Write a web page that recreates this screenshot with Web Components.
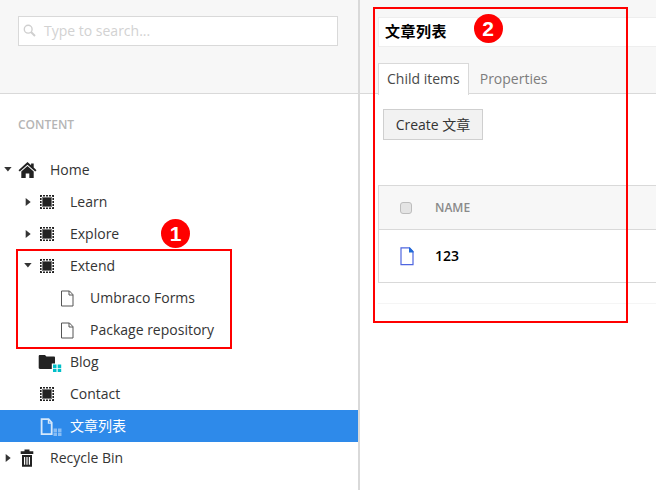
<!DOCTYPE html>
<html>
<head>
<meta charset="utf-8">
<title>Content</title>
<style>
  html, body { margin: 0; height: 100%; overflow: hidden; background: #fff; }
  body { font: 14px "Open Sans", "Noto Sans CJK SC", sans-serif; color: #343434; }
</style>
</head>
<body>

<app-shell>
  <tree-panel slot="left">
    <tree-row depth="0" arrow="down" icon="home">Home</tree-row>
    <tree-row depth="1" arrow="right" icon="grid">Learn</tree-row>
    <tree-row depth="1" arrow="right" icon="grid">Explore</tree-row>
    <tree-row depth="1" arrow="down" icon="grid">Extend</tree-row>
    <tree-row depth="2" icon="doc">Umbraco Forms</tree-row>
    <tree-row depth="2" icon="doc">Package repository</tree-row>
    <tree-row depth="1" icon="folder">Blog</tree-row>
    <tree-row depth="1" icon="grid">Contact</tree-row>
    <tree-row depth="1" icon="doclist" active>文章列表</tree-row>
    <tree-row depth="0" arrow="right" icon="trash">Recycle Bin</tree-row>
  </tree-panel>
  <editor-panel slot="right" name="文章列表"></editor-panel>
</app-shell>

<note-mark n="1" style="left:16px;top:249px;width:216px;height:100px;--bx:143px;--by:-32px"></note-mark>
<note-mark n="2" style="left:373px;top:7px;width:255px;height:316px;--bx:98.5px;--by:5px"></note-mark>

<script>
const ICONS = {
  home: '<g transform="translate(.5 2)"><path fill="currentColor" d="M9 0 0 8.2l1.3 1.4L9 2.7l7.7 6.9L18 8.2l-2.8-2.6V1.4h-2.6v1.9L9 0Z"/><path fill="currentColor" d="M2.8 9.6 9 4l6.2 5.6V16h-4.4v-4.4H7.2V16H2.8Z"/></g>',
  grid: '<rect x="5" y="6" width="8" height="8" fill="currentColor"/><rect x="4.5" y="5.5" width="9" height="9" fill="none" stroke="currentColor" stroke-opacity=".6"/><path fill="none" stroke="currentColor" stroke-width="1.6" stroke-dasharray="2 1" d="M2 3.8h14M2 16.2h14M2.8 3v14M15.2 3v14"/>',
  doc: '<path fill="#fff" stroke="#555" d="M3.5 3h8l3.5 3.7V18H3.5Z"/><path fill="none" stroke="#555" d="M11 3v4h4"/>',
  folder: '<path fill="currentColor" d="M.7 4.2C.7 3.4 1.2 3 1.9 3H7l1.4 1.4h7.4c.8 0 1.2.5 1.2 1.2V17H1.9c-.7 0-1.2-.5-1.2-1.2Z"/><path fill="#fff" d="M13.8 11.5H24V21H13.8Z"/><path fill="#00bfc8" d="M15 12.5h3.5V16H15zM19.7 12.5h3.5V16h-3.5zM15 16.8h3.5v3.4H15zM19.7 16.8h3.5v3.4h-3.5z"/>',
  doclist: '<path fill="none" stroke="currentColor" stroke-width="1.8" d="M3.6 3.2h7l3.1 3.4v11.6H3.6Z"/><path fill="none" stroke="currentColor" stroke-width="1.2" d="M10.4 3.2v4h3.2"/><path fill="currentColor" opacity=".55" d="M15.5 12.4H19V16h-3.5zM20 12.4h3.5V16H20zM15.5 16.6H19v3.4h-3.5zM20 16.6h3.5v3.4H20z"/>',
  trash: '<path fill="currentColor" d="M6.5 3.3V1.5h5v1.8h3.8V6H2.7V3.3Z"/><path fill="currentColor" fill-rule="evenodd" d="M4 7h10v11.7H4ZM6 9v7.7h1.2V9Zm2.4 0v7.7h1.2V9Zm2.4 0v7.7H12V9Z"/>'
}

const shellTpl = document.createElement('template')
shellTpl.innerHTML = `
  <style>
    :host { display: flex; width: 656px; height: 490px; }
    .left { width: 358px; flex: none; border-right: 2px solid #d9d9d9; }
    .right { flex: 1; min-width: 0; }
  </style>
  <div class="left"><slot name="left"></slot></div>
  <div class="right"><slot name="right"></slot></div>
`
class AppShell extends HTMLElement {
  constructor () {
    super()
    this.attachShadow({ mode: 'open' })
    this.shadowRoot.appendChild(shellTpl.content.cloneNode(true))
  }
}

const treeTpl = document.createElement('template')
treeTpl.innerHTML = `
  <style>
    :host { display: block; }
    .head {
      background: #f7f7f7;
      border-bottom: 1px solid #d9d9d9;
      box-sizing: border-box;
      height: 94px;
      padding: 16px 20px 0 18px;
    }
    .search {
      align-items: center;
      background: #fff;
      border: 1px solid #d9d9d9;
      box-sizing: border-box;
      color: #d2d2d2;
      display: flex;
      gap: 8px;
      height: 30px;
      padding: 0 0 2px 4px;
    }
    .title {
      color: #b5b5b5;
      font-size: 12px;
      font-weight: 600;
      line-height: 16px;
      padding: 23px 0 21px 18px;
    }
  </style>
  <div class="head">
    <div class="search">
      <svg width="13" height="13" viewBox="0 0 13 13"><circle cx="5.2" cy="5.2" r="3.9" fill="none" stroke="#cfcfcf" stroke-width="1.4"/><path d="m8 8 4 4" stroke="#cfcfcf" stroke-width="2"/></svg>
      <span>Type to search...</span>
    </div>
  </div>
  <div class="title">CONTENT</div>
  <slot></slot>
`
class TreePanel extends HTMLElement {
  constructor () {
    super()
    this.attachShadow({ mode: 'open' })
    this.shadowRoot.appendChild(treeTpl.content.cloneNode(true))
  }
}

class TreeRow extends HTMLElement {
  constructor () {
    super()
    this.attachShadow({ mode: 'open' })
    const depth = Number(this.getAttribute('depth'))
    const arrow = this.getAttribute('arrow')
    const icon = this.getAttribute('icon')
    const arrows = {
      down: '<path d="M1.2 1h7.4L4.9 5.6Z"/>',
      right: '<path d="M2.7 0l5 4-5 4Z"/>'
    }
    this.shadowRoot.innerHTML = `
      <style>
        :host { display: block; color: #222; }
        :host([active]) { background: #2e8aea; color: #fff; }
        .row {
          align-items: center;
          display: flex;
          height: 32px;
          padding-left: ${3 + depth * 20}px;
        }
        .arrow { color: #343434; flex: none; height: 8px; width: 8px; margin-right: 7px; overflow: visible; }
        .icon { flex: none; width: 24px; height: 20px; margin-right: 8px; }
        :host([active]) .icon { color: #d5e8fb; }
        span { color: #343434; line-height: 20px; white-space: nowrap; }
        :host([active]) span { color: #fff; }
      </style>
      <div class="row">
        <svg class="arrow" viewBox="0 0 8 8" fill="currentColor">${arrows[arrow] || ''}</svg>
        <svg class="icon" viewBox="0 0 24 20">${ICONS[icon]}</svg>
        <span><slot></slot></span>
      </div>
    `
  }
}

const editorTpl = document.createElement('template')
editorTpl.innerHTML = `
  <style>
    :host { display: block; }
    .head {
      background: #f7f7f7;
      border-bottom: 1px solid #d9d9d9;
      box-sizing: border-box;
      height: 94px;
      padding: 17px 0 0 18px;
    }
    .name {
      background: #fff;
      border: 1px solid #eeeeee;
      border-right: 0;
      box-sizing: border-box;
      color: #000;
      font-size: 15px;
      font-weight: 700;
      height: 30px;
      letter-spacing: .5px;
      line-height: 27px;
      padding-left: 6px;
    }
    .tabs { display: flex; margin-top: 16px; }
    .tab { box-sizing: border-box; height: 32px; line-height: 30px; padding: 1px 8px 0; color: #7d7d7d; }
    .tab.on {
      background: #fff;
      border: 1px solid #d9d9d9;
      border-bottom: 0;
      color: #494949;
      margin-right: 3px;
      padding-top: 0;
    }
    .body { padding: 15px 0 0 18px; }
    .btn {
      background: #f2f2f2;
      border: 1px solid #cfcfcf;
      box-sizing: border-box;
      color: #343434;
      height: 31px;
      line-height: 29px;
      margin: 0 0 45px 5px;
      text-align: center;
      width: 100px;
    }
    .table { border: 1px solid #d9d9d9; border-right: 0; }
    .thead, .trow { align-items: center; display: flex; padding-left: 21px; }
    .thead { background: #f7f7f7; border-bottom: 1px solid #d9d9d9; height: 43px; }
    .trow { height: 52px; }
    .cell { flex: none; width: 35px; display: flex; }
    .check {
      background: #e4e4e4;
      border: 1px solid #bdbdbd;
      border-radius: 3px;
      box-sizing: border-box;
      height: 12px;
      width: 12px;
    }
    .col { color: #8a8a8a; font-size: 12px; font-weight: 600; }
    .val { color: #000; font-size: 14px; font-weight: 600; padding-bottom: 2px; }
    .rule { border-top: 1px solid #f5f5f5; margin-top: 20px; }
  </style>
  <div class="head">
    <div class="name"></div>
    <div class="tabs">
      <div class="tab on">Child items</div>
      <div class="tab">Properties</div>
    </div>
  </div>
  <div class="body">
    <div class="btn">Create 文章</div>
    <div class="table">
      <div class="thead">
        <div class="cell"><div class="check"></div></div>
        <div class="col">NAME</div>
      </div>
      <div class="trow">
        <div class="cell">
          <svg width="14" height="19" viewBox="0 0 14 19"><path fill="#fff" stroke="#4f66e0" stroke-width="1.2" d="M1 .8h8.4L13 4.6v13H1Z"/><path fill="#1f6bd6" d="M9 .4h1l3.5 4v1H9Z"/></svg>
        </div>
        <div class="val">123</div>
      </div>
    </div>
    <div class="rule"></div>
  </div>
`
class EditorPanel extends HTMLElement {
  constructor () {
    super()
    this.attachShadow({ mode: 'open' })
    this.shadowRoot.appendChild(editorTpl.content.cloneNode(true))
    this.shadowRoot.querySelector('.name').textContent = this.getAttribute('name')
  }
}

// red annotation box with a numbered badge, sits over the page
class NoteMark extends HTMLElement {
  constructor () {
    super()
    this.attachShadow({ mode: 'open' })
    this.shadowRoot.innerHTML = `
      <style>
        :host { border: 2px solid #f00; box-sizing: border-box; display: block; pointer-events: none; position: absolute; }
        b {
          background: #f00;
          border-radius: 50%;
          color: #fff;
          font: 700 21px/29px "Liberation Sans", sans-serif;
          height: 29px;
          left: var(--bx);
          position: absolute;
          text-align: center;
          top: var(--by);
          width: 29px;
        }
      </style>
      <b>${this.getAttribute('n')}</b>
    `
  }
}

customElements.define('app-shell', AppShell)
customElements.define('tree-panel', TreePanel)
customElements.define('tree-row', TreeRow)
customElements.define('editor-panel', EditorPanel)
customElements.define('note-mark', NoteMark)
</script>
</body>
</html>
